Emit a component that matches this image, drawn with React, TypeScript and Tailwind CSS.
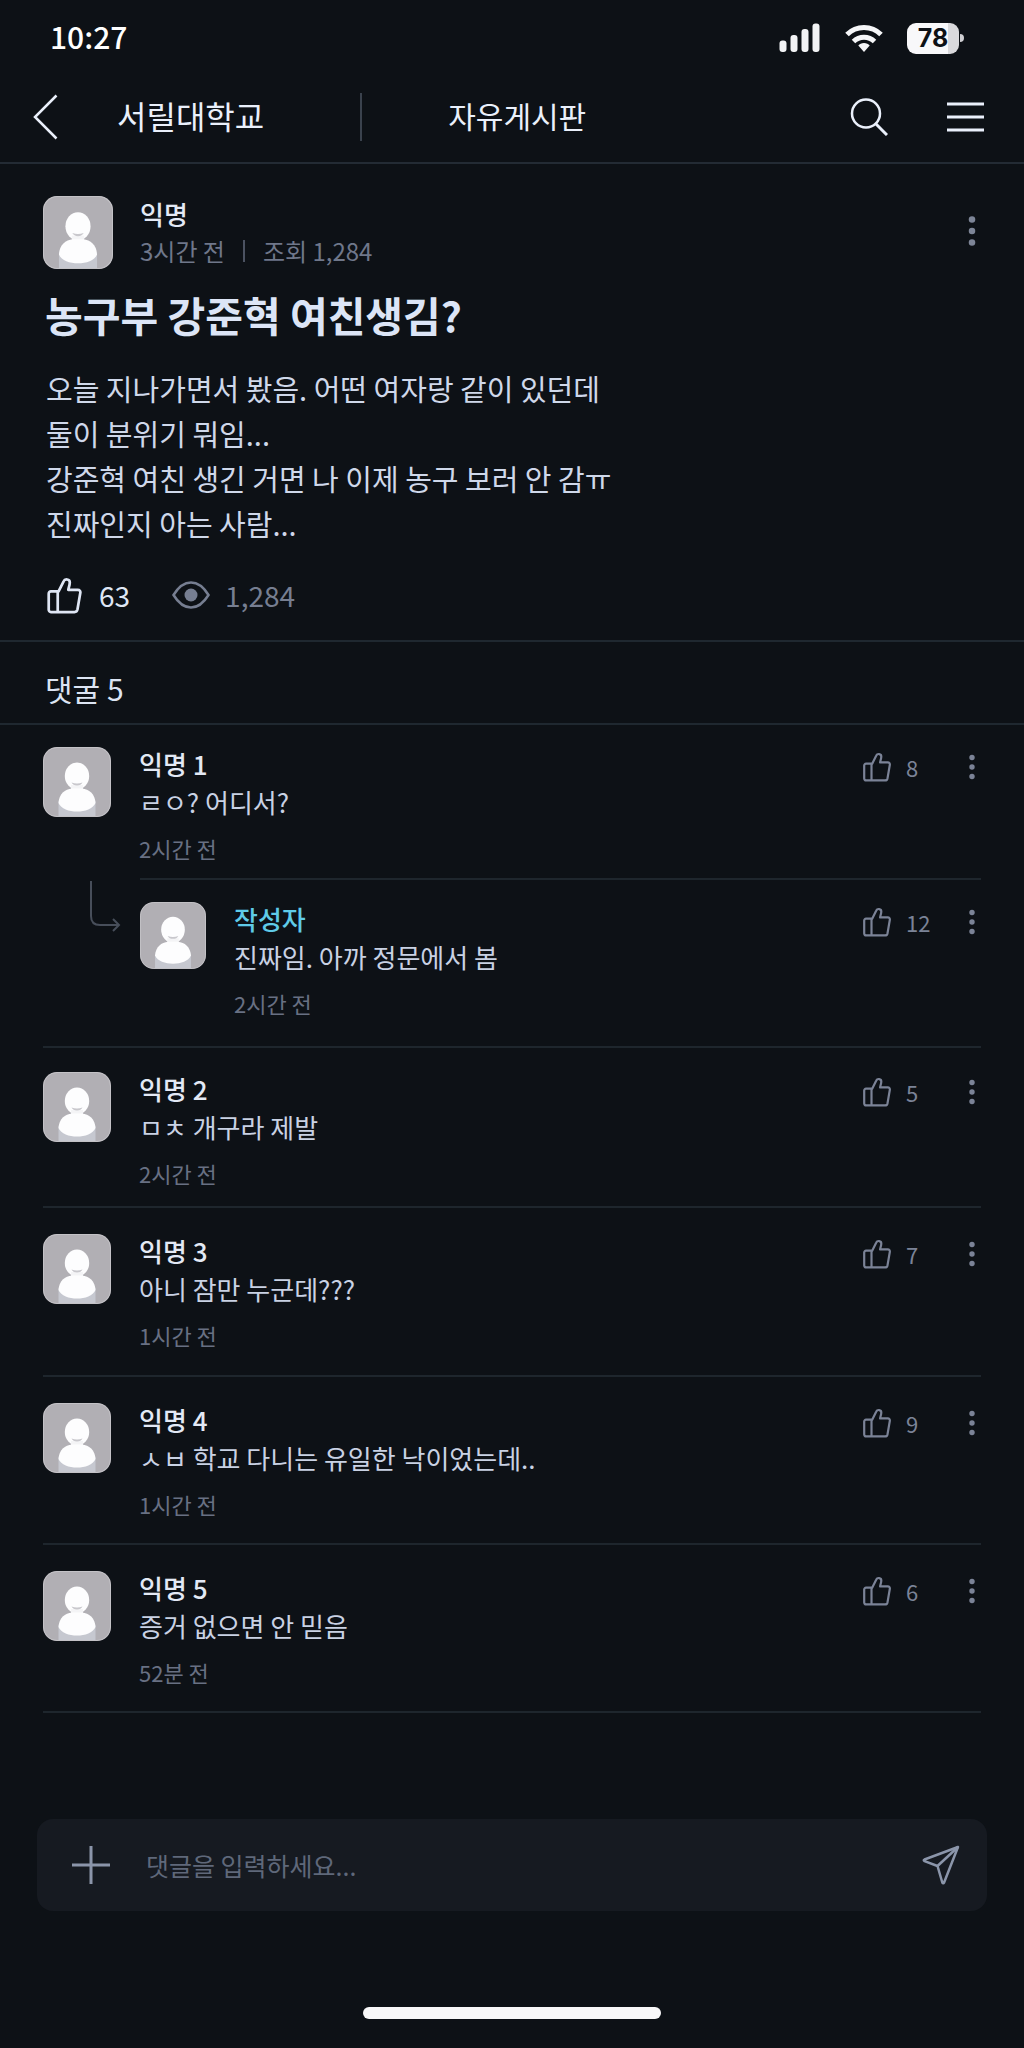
import { useState } from "react"

type Comment = {
  id: number
  name: string
  text: string
  time: string
  likes: number
  spacing: string
  isAuthor?: boolean
}

const comments: Comment[] = [
  { id: 1, name: "익명 1", text: "ㄹㅇ? 어디서?", time: "2시간 전", likes: 8, spacing: "pt-[22px] pb-[15px]" },
  { id: 2, name: "작성자", text: "진짜임. 아까 정문에서 봄", time: "2시간 전", likes: 12, spacing: "pt-[22px] pb-7", isAuthor: true },
  { id: 3, name: "익명 2", text: "ㅁㅊ 개구라 제발", time: "2시간 전", likes: 5, spacing: "pt-6 pb-[18px]" },
  { id: 4, name: "익명 3", text: "아니 잠만 누군데???", time: "1시간 전", likes: 7, spacing: "pt-[26px] pb-[25px]" },
  { id: 5, name: "익명 4", text: "ㅅㅂ 학교 다니는 유일한 낙이었는데..", time: "1시간 전", likes: 9, spacing: "pt-[26px] pb-6" },
  { id: 6, name: "익명 5", text: "증거 없으면 안 믿음", time: "52분 전", likes: 6, spacing: "pt-[26px] pb-6" },
]

function Avatar({ className }: { className: string }) {
  return (
    <svg viewBox="0 0 68 70" preserveAspectRatio="none" className={`shrink-0 rounded-[14px] ${className}`} aria-hidden="true">
      <rect width="68" height="70" fill="#b1afb4" />
      <path d="M15.500 54h37v16h-37z" fill="#c6c8d0" />
      <ellipse cx="34" cy="29" rx="12.200" ry="13.500" fill="#fdfdfe" />
      <path d="M28 38h12v6H28z" fill="#f4f4f6" />
      <path d="M15.500 56C16 47 22 42 29 41.500h10C46 42 52 47 52.500 56 50 62 42 64.500 34 64.500S18 62 15.500 56z" fill="#fdfdfe" />
      <path d="M28.500 35.500q5.500 2 11 0q-1.500 3-5.500 3t-5.500-3z" fill="#c9c8cd" />
      <rect x="0.500" y="0.500" width="67" height="69" rx="13.500" fill="none" stroke="#c3c2c6" />
    </svg>
  )
}

function ThumbIcon({ className }: { className: string }) {
  return (
    <svg viewBox="0 0 28 30" className={className} fill="none" stroke="currentColor" strokeWidth="2.200" strokeLinejoin="round" aria-hidden="true">
      <path d="M1.200 13.500a1.800 1.800 0 0 1 1.800-1.800h6.200L13.300 3.500c1-2.300 5-1.900 5 .9 0 2-.9 4.200-1.200 6h7.600c1.600 0 2.400 1.200 2.100 2.600l-2.300 13.400c-.3 1.300-1.200 2-2.400 2H3a1.800 1.800 0 0 1-1.800-1.800z" />
      <path d="M8.500 11.700v16.700" />
    </svg>
  )
}

function Dots({ className }: { className: string }) {
  return (
    <svg viewBox="0 0 10 28" className={className} fill="currentColor" aria-hidden="true">
      <circle cx="5" cy="4.500" r="2.700" />
      <circle cx="5" cy="14" r="2.700" />
      <circle cx="5" cy="23.500" r="2.700" />
    </svg>
  )
}

function StatusBar() {
  return (
    <div className="flex h-[76px] items-center pl-[50px] pr-[60px] text-white">
      <span className="pb-1 text-[30px] leading-none font-medium">10:27</span>
      <div className="ml-auto flex items-center">
        <svg viewBox="0 0 42 30" className="mr-6 h-[30px] w-[42px]" fill="#f2f3f5" aria-hidden="true">
          <rect x="0.500" y="17.500" width="7" height="11.500" rx="3" />
          <rect x="11.500" y="12" width="7" height="17" rx="3" />
          <rect x="22.500" y="6" width="7" height="23" rx="3" />
          <rect x="33.500" y="0.500" width="7" height="28.500" rx="3" />
        </svg>
        <svg viewBox="0 0 38 29" className="mr-6 h-[29px] w-[38px]" fill="none" stroke="#f5f6f8" strokeWidth="5" aria-hidden="true">
          <path d="M2 10.500a24 24 0 0 1 34 0" />
          <path d="M8.500 17.500a15 15 0 0 1 21 0" />
          <path d="M19 19c-2.500 0-4.500 1-5.700 2.500L19 28l5.700-6.500C23.500 20 21.500 19 19 19z" fill="#f5f6f8" stroke="none" />
        </svg>
        <div className="flex items-center">
          <div className="flex h-[31px] w-[52px] items-center justify-center rounded-[9px] bg-[linear-gradient(90deg,#f8f8fa_78%,#d9d9dc_78%)] font-['Inter',sans-serif] text-[25px] leading-none font-bold text-[#0d1116]">
            78
          </div>
          <div className="ml-px h-2 w-1 rounded-r-full bg-[#cfcfd3]" />
        </div>
      </div>
    </div>
  )
}

function TopNav() {
  return (
    <header className="flex h-[88px] items-center border-b-2 border-[#232b34] pr-10 pb-[5px] pl-8 text-[#eaf0fb]">
      <button type="button" aria-label="뒤로" className="w-[26px]">
        <svg viewBox="0 0 26 46" className="h-[46px] w-[26px]" fill="none" stroke="currentColor" strokeWidth="2.500" aria-hidden="true">
          <path d="M24.500 1.500 3 23l21.500 21.500" />
        </svg>
      </button>
      <a href="#university" className="ml-[59px] pb-1 text-[32px] leading-10">서릴대학교</a>
      <div className="ml-24 h-12 w-0.5 bg-[#3a424d]" />
      <h2 className="ml-[86px] pb-1 text-[30px] leading-10">자유게시판</h2>
      <div className="ml-auto flex items-center gap-[58px]">
        <button type="button" aria-label="검색">
          <svg viewBox="0 0 38 38" className="h-[38px] w-[38px]" fill="none" stroke="currentColor" strokeWidth="2.500" aria-hidden="true">
            <circle cx="16" cy="15.500" r="14" />
            <path d="m26 26 11 11" strokeWidth="3" />
          </svg>
        </button>
        <button type="button" aria-label="메뉴">
          <svg viewBox="0 0 38 30" className="h-[30px] w-[38px]" stroke="currentColor" strokeWidth="3" aria-hidden="true">
            <path d="M1 2h37M1 15h37M1 28h37" />
          </svg>
        </button>
      </div>
    </header>
  )
}

function Post() {
  return (
    <article className="border-b-2 border-[#1f2830] px-[43px] pt-8 pb-[25px]">
      <div className="flex h-[74px] items-start">
        <Avatar className="h-[73px] w-[70px]" />
        <div className="ml-[27px]">
          <p className="text-[26px] leading-[36px] font-medium text-[#e3e9f5]">익명</p>
          <p className="flex items-center text-2xl leading-[38px] text-[#6f778a]">
            3시간 전
            <span className="mx-[18px] h-[22px] w-0.5 bg-[#4b5261]" />
            조회 1,284
          </p>
        </div>
        <button type="button" aria-label="게시글 메뉴" className="mt-[17px] mr-[3px] ml-auto text-[#7d8597]">
          <Dots className="h-9 w-3" />
        </button>
      </div>
      <h1 className="mt-3.5 ml-0.5 text-[41px] leading-[60px] font-bold text-[#dce5f6]">농구부 강준혁 여친생김?</h1>
      <p className="mt-[22px] ml-[3px] text-[29px] leading-[45px] text-[#cfd8ea]">
        오늘 지나가면서 봤음. 어떤 여자랑 같이 있던데
        <br />
        둘이 분위기 뭐임...
        <br />
        강준혁 여친 생긴 거면 나 이제 농구 보러 안 감ㅠ
        <br />
        진짜인지 아는 사람...
      </p>
      <div className="mt-[29px] ml-1 flex items-center text-[28px] leading-10">
        <button type="button" className="flex items-center gap-[17px] text-[#dfe6f4]" aria-label="좋아요 63">
          <ThumbIcon className="h-[37px] w-[35px]" />
          63
        </button>
        <div className="ml-[42px] flex items-center gap-[15px] text-[#767e91]">
          <svg viewBox="0 0 38 28" className="h-7 w-[38px]" fill="none" stroke="currentColor" strokeWidth="2.500" aria-hidden="true">
            <path d="M1.500 14C7 5 12.500 1.500 19 1.500S31 5 36.500 14C31 23 25.500 26.500 19 26.500S7 23 1.500 14z" />
            <circle cx="19" cy="14" r="6.500" fill="currentColor" stroke="none" />
          </svg>
          1,284
        </div>
      </div>
    </article>
  )
}

function CommentRow({ comment }: { comment: Comment }) {
  const { name, text, time, likes, spacing, isAuthor } = comment

  return (
    <div className={`flex flex-1 items-start ${spacing}`}>
      <Avatar className={isAuthor ? "h-[67px] w-[66px]" : "h-[70px] w-[68px]"} />
      <div className="ml-7">
        <p className={`text-[26px] leading-[34px] font-medium ${isAuthor ? "text-[#5fcbe8]" : "text-[#e3e9f5]"}`}>{name}</p>
        <p className="mt-0.5 text-[26px] leading-[38px] text-[#c9d2e4]">{text}</p>
        <p className="mt-3 text-[22px] leading-[30px] text-[#687083]">{time}</p>
      </div>
      <div className="mt-[5px] mr-1 ml-auto flex items-center text-[#7b8397]">
        <button type="button" className="flex items-center gap-[15px] text-[22px] leading-[30px]" aria-label={`좋아요 ${likes}`}>
          <ThumbIcon className="h-[30px] w-7" />
          <span className="w-[61px] text-left">{likes}</span>
        </button>
        <button type="button" aria-label="댓글 메뉴">
          <Dots className="h-7 w-2.5" />
        </button>
      </div>
    </div>
  )
}

function CommentList() {
  return (
    <section>
      <h2 className="border-b-2 border-[#1f2830] px-[45px] pt-[26px] pb-[15px] text-[30px] leading-10 text-[#dce4f3]">댓굴 5</h2>
      <ul className="px-[43px]">
        {comments.map((c) =>
          c.isAuthor ? (
            <li key={c.id} className="flex border-b-2 border-[#1e262d]">
              <svg viewBox="0 0 97 56" className="h-14 w-[97px] shrink-0" fill="none" stroke="#474e5a" strokeWidth="2" aria-hidden="true">
                <path d="M48 1v35q0 9 9 9h19M70 39l6 6-6 6" />
              </svg>
              <CommentRow comment={c} />
            </li>
          ) : (
            <li key={c.id}>
              <CommentRow comment={c} />
              <div className={c.id === 1 ? "ml-[97px] h-0.5 bg-[#1e262d]" : "h-0.5 bg-[#1e262d]"} />
            </li>
          )
        )}
      </ul>
    </section>
  )
}

function CommentForm() {
  const [value, setValue] = useState("")

  return (
    <form onSubmit={(e) => e.preventDefault()} className="mx-[37px] flex h-[92px] items-center rounded-2xl bg-[#161a21] px-[35px] text-[#8b95aa]">
      <button type="button" aria-label="첨부">
        <svg viewBox="0 0 38 38" className="h-[38px] w-[38px]" stroke="currentColor" strokeWidth="3" aria-hidden="true">
          <path d="M19 0v38M0 19h38" />
        </svg>
      </button>
      <input
        aria-label="댓글"
        value={value}
        onChange={(e) => setValue(e.target.value)}
        placeholder="댓글을 입력하세요..."
        className="ml-9 h-12 min-w-0 flex-1 bg-transparent text-[25px] text-[#cfd8ea] outline-none placeholder:text-[#5f687a]"
      />
      <button type="submit" aria-label="보내기" className="-mr-2">
        <svg viewBox="0 0 38 40" className="h-10 w-[38px]" fill="none" stroke="currentColor" strokeWidth="2.500" strokeLinejoin="round" aria-hidden="true">
          <path d="M36 2 2.500 14.500q-1.500.8 0 1.600L15.500 21l4.800 16.500q.9 1.500 1.800 0z" />
          <path d="M36 2 15.500 21" />
        </svg>
      </button>
    </form>
  )
}

export default function App() {
  return (
    <div className="flex min-h-screen w-full flex-col bg-[#0d1116] font-['Noto_Sans_CJK_KR',sans-serif]">
      <StatusBar />
      <TopNav />
      <main>
        <Post />
        <CommentList />
      </main>
      <footer className="mt-auto pt-10 pb-[29px]">
        <CommentForm />
        <div className="mx-auto mt-24 h-3 w-[298px] rounded-full bg-[#f8f8f9]" />
      </footer>
    </div>
  )
}
